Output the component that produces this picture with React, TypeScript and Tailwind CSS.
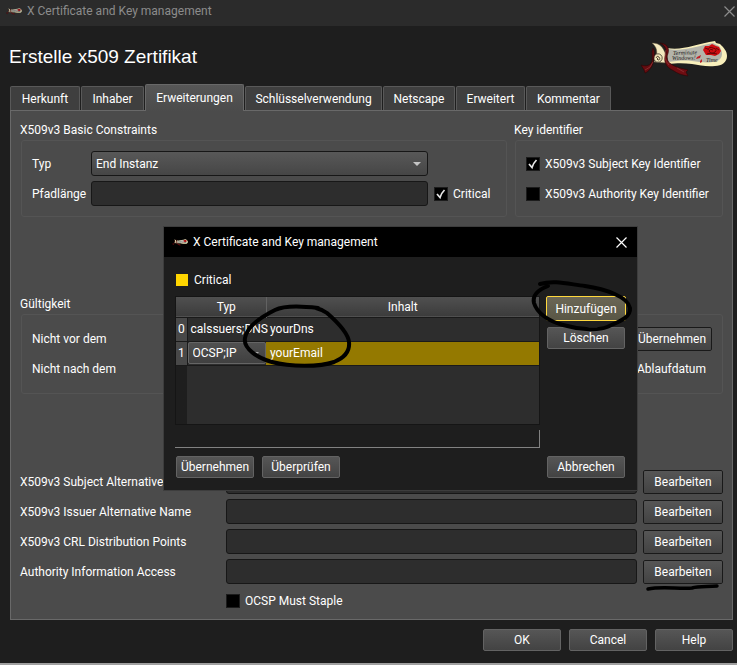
import React from "react";

const buttonBase =
  "rounded-[2px] border bg-linear-to-b from-[#565656] to-[#434343] text-center whitespace-nowrap text-white";
const dialogButton = `${buttonBase} h-[22px] w-[78px] border-[#636363]`;
const panelButton = `${buttonBase} h-6 w-20 shrink-0 border-[#666] outline -outline-offset-1 outline-[#191919]`;
const lineInput =
  "h-[25px] min-w-0 flex-1 rounded-[3px] border border-[#171717] bg-[#2d2d2d] px-1 text-white";

function Scroll({ className }: { className: string }) {
  return (
    <svg className={className} viewBox="0 0 88 38" aria-hidden="true">
      <path
        d="M27 8 C42 11 56 4 75 1 L76 3 L80 4 C84 8 87 11 87 16 C87 22 82 26 75 26 C66 27 60 25 52 24 C44 23 37 23 28 24 Z"
        fill="#f8efbb"
      />
      <path d="M28 9 C42 12 58 6 73 3 L79 6 C82 10 84 16 79 20 C72 24 61 22 52 21 C44 20 36 21 28 22 Z" fill="#b4b4aa" />
      <path d="M12 3 C20 3 23 7 26 15 L27 23 L14 22 C17 15 19 9 12 3Z" fill="#f3e8bd" stroke="#60543c" strokeWidth=".5" />
      <circle cx="18" cy="18" r="4.2" fill="#efe4b8" stroke="#3b342b" strokeWidth=".8" />
      <path d="M16 18 q1 -3 3 -1 q2 3 -1 3 q-2 -1 0 -2" fill="none" stroke="#463929" strokeWidth=".9" />
      <path d="M13 8 C16 13 13 19 13 23 C12 29 6 33 5 33 L4 30 L1 25 C7 27 11 25 12 21 C13 16 11 12 13 8Z" fill="#650c10" stroke="#2c0505" strokeWidth=".6" />
      <path d="M20 3 C29 4 30 10 27 16 C26 26 41 28 48 30 L46 32 L48 36 C41 35 37 33 34 31 C25 27 23 20 26 14 C27 8 24 5 20 3Z" fill="#6e0d12" stroke="#2c0505" strokeWidth=".6" />
      <path d="M26 10 q-3 9 3 15 M5 30 q6 -2 8 -8 M37 28 l7 4" fill="none" stroke="#94383a" strokeWidth=".7" />
      <g className="font-['Liberation_Serif',serif] italic" fill="#202020" fontSize="6">
        <text x="33" y="15" transform="rotate(-2 33 15)">Terminate</text>
        <text x="32" y="20" transform="rotate(-1 32 20)">Windows!</text>
        <text x="66" y="22">Time</text>
      </g>
      <path d="M63 10 L65 6 L69 6 L72 4 L76 6 L79 7 L81 11 L79 14 L75 16 L71 15 L66 15Z" fill="#ce0c10" />
      <path d="M68 10 q1 -4 5 -2 q5 1 2 4 q-4 3 -6 -1 q1 -3 4 -1 M65 8 l3 1 M76 8 l3 2 M67 14 l4 -1 l6 1" fill="none" stroke="#650507" strokeWidth="1" />
      <path d="M57 17 l4 -2 l-1 3 -4 1Z M60 21 l2 -2 0 3 -2 1Z" fill="#bc2028" />
    </svg>
  );
}

function CloseIcon({ className }: { className: string }) {
  return (
    <svg className={className} width="11" height="11" viewBox="0 0 11 11" fill="none" stroke="currentColor" strokeWidth="1.2" aria-hidden="true">
      <path d="M.5 .5 L10.5 10.5 M10.5 .5 L.5 10.5" />
    </svg>
  );
}

function Check({ label, checked = false }: { label: string; checked?: boolean }) {
  return (
    <label className="flex items-center gap-[5px] whitespace-nowrap">
      <span className="grid">
        <input
          type="checkbox"
          defaultChecked={checked}
          className="peer col-start-1 row-start-1 size-[14px] appearance-none border border-[#1c1c1c] bg-black"
        />
        <svg
          className="pointer-events-none invisible col-start-1 row-start-1 size-[14px] peer-checked:visible"
          viewBox="0 0 14 14"
          fill="none"
          stroke="#e6e6e6"
          strokeWidth="1.7"
          aria-hidden="true"
        >
          <path d="M3 7 L6 10.500 C7 7 8.500 5 10.500 3" />
        </svg>
      </span>
      {label}
    </label>
  );
}

function Tab({ label, width, active = false }: { label: string; width: string; active?: boolean }) {
  return (
    <button
      type="button"
      role="tab"
      aria-selected={active}
      className={`${width} rounded-t-[2px] border border-b-0 text-center whitespace-nowrap ${
        active
          ? "relative -mb-px h-[27px] border-[#686868] bg-linear-to-b from-[#565656] to-[#4b4b4b]"
          : "h-6 border-[#595959] bg-[#3f3f3f]"
      }`}
    >
      {label}
    </button>
  );
}

function Group({ title, className, children }: { title: string; className: string; children: React.ReactNode }) {
  return (
    <section className={className} aria-label={title}>
      <h2 className="h-5 leading-5">{title}</h2>
      <div className="ml-px rounded-[3px] border border-[#545454] px-[10px] py-[10px]">{children}</div>
    </section>
  );
}

function ExtensionRow({ label, id, marked = false }: { label: string; id: string; marked?: boolean }) {
  return (
    <div className="flex items-center">
      <label htmlFor={id} className="w-[206px] shrink-0 whitespace-nowrap">
        {label}
      </label>
      <input id={id} type="text" className={lineInput} />
      <div className="relative ml-[6px]">
        <button type="button" className={`${panelButton} block`}>
          Bearbeiten
        </button>
        {marked && (
          <svg className="pointer-events-none absolute top-[24px] left-0" width="80" height="8" viewBox="0 0 80 8" fill="none" aria-hidden="true">
            <path d="M5 5 C18 2 35 5 49 4 C56 2 65 3 74 2" stroke="#000" strokeWidth="3.500" strokeLinecap="round" />
          </svg>
        )}
      </div>
    </div>
  );
}

function NamesDialog() {
  return (
    <div role="dialog" aria-label="X Certificate and Key management" className="absolute top-[227px] left-[164px] w-[473px] bg-[#1e1e1e] outline outline-[#3d3d3d]">
      <header className="flex h-[30px] items-center bg-black pr-[10px] pl-2">
        <Scroll className="h-[7px] w-4" />
        <h2 className="ml-[5px] flex-1">X Certificate and Key management</h2>
        <button type="button" aria-label="Schließen">
          <CloseIcon className="text-white" />
        </button>
      </header>
      <div className="px-[11px] pt-[13px] pb-3">
        <label className="flex h-5 items-center gap-[6px] pl-px">
          <input type="checkbox" className="size-3 appearance-none bg-[#ffd500]" />
          Critical
        </label>
        <div className="mt-[4px] flex items-start">
          <div className="mt-[2px] h-[129px] min-w-0 flex-1 border border-[#151515] bg-linear-to-r from-[#1e1e1e] from-[11px] to-[#2d2d2d] to-[11px]">
            <table className="w-full table-fixed border-collapse">
              <colgroup>
                <col className="w-[11px]" />
                <col className="w-[79px]" />
                <col />
              </colgroup>
              <thead>
                <tr className="h-5 border-b border-[#1a1a1a] bg-linear-to-b from-[#505050] to-[#3c3c3c]">
                  <td className="p-0" />
                  <th className="border-r border-[#626262] p-0 font-normal">Typ</th>
                  <th className="p-0 font-normal">Inhalt</th>
                </tr>
              </thead>
              <tbody>
                <tr className="h-6 border-b border-[#1a1a1a]">
                  <th className="border-r border-[#1a1a1a] bg-[#484848] p-0 font-normal">0</th>
                  <td className="p-0 pl-[3px] whitespace-nowrap">calssuers;DNS</td>
                  <td className="p-0 pl-1">yourDns</td>
                </tr>
                <tr className="h-6 border-b border-[#1a1a1a]">
                  <th className="border-r border-[#1a1a1a] bg-[#484848] p-0 font-normal">1</th>
                  <td className="p-0">
                    <div className="grid items-center">
                      <select aria-label="Typ" className="col-start-1 row-start-1 h-[22px] w-full appearance-none rounded-[2px] border border-[#656565] bg-linear-to-b from-[#505050] to-[#404040] pl-1">
                        <option>OCSP;IP</option>
                      </select>
                      <span className="pointer-events-none col-start-1 row-start-1 mr-[7px] justify-self-end border-x-[3px] border-t-[3px] border-x-transparent border-t-[#aaa]" />
                    </div>
                  </td>
                  <td className="bg-[#947900] p-0 pl-1">yourEmail</td>
                </tr>
              </tbody>
            </table>
          </div>
          <div className="ml-[6px] flex flex-col items-center gap-[6px] pt-[2px]">
            <button type="button" className="h-[25px] w-20 rounded-[2px] border border-[#ffd83c] bg-linear-to-b from-[#6b6756] to-[#595645] text-center">
              Hinzufügen
            </button>
            <button type="button" className={dialogButton}>
              Löschen
            </button>
          </div>
        </div>
        <div className="mt-[5px] mr-[86px] h-[18px] border-r border-b border-[#828282]" />
        <footer className="mt-2 flex gap-2 px-px">
          <button type="button" className={dialogButton}>
            Übernehmen
          </button>
          <button type="button" className={dialogButton}>
            Überprüfen
          </button>
          <button type="button" className={`${dialogButton} ml-auto`}>
            Abbrechen
          </button>
        </footer>
      </div>
      <svg className="pointer-events-none absolute inset-0" width="473" height="263" viewBox="164 227 473 263" fill="none" stroke="#000" strokeWidth="4" strokeLinecap="round" strokeLinejoin="round" aria-hidden="true">
        <path d="M318 308 C302 306 285 305 275 310 C261 317 247 326 245 338 C243 349 258 358 272 362 C290 367 320 367 334 362 C344 358 350 351 349 342 C348 332 335 320 327 313 C323 310 320 309 316 308" />
        <path d="M540 284 C554 280 568 284 585 286 C606 289 628 297 630 308 C631 318 618 322 607 327 C597 331 577 329 563 325 C548 321 537 313 534 303 C532 294 540 289 548 286" />
      </svg>
    </div>
  );
}

export default function App() {
  return (
    <main className="relative min-h-screen border-b-2 border-[#a0a0a0] bg-[#1e1e1e] font-['Roboto','Noto_Sans',sans-serif] text-[12px] leading-4 text-white">
      <header className="flex h-[26px] items-center bg-[#2b2b2b] pr-[2px] pb-1 pl-[6px] text-[#8c8c8c]">
        <Scroll className="h-[7px] w-4 opacity-80" />
        <span className="ml-[5px] flex-1">X Certificate and Key management</span>
        <button type="button" aria-label="Fenster schließen">
          <CloseIcon className="text-[#8c8c8c]" />
        </button>
      </header>
      <div className="flex h-[58px] items-start justify-between pr-[9px] pl-[9px]">
        <h1 className="pt-[19px] font-['Liberation_Sans',Arial,sans-serif] text-[19px] leading-6">Erstelle x509 Zertifikat</h1>
        <Scroll className="mt-[14px] h-[38px] w-[88px]" />
      </div>

      <div role="tablist" className="flex items-end gap-px pl-[10px]">
        <Tab label="Herkunft" width="w-[70px]" />
        <Tab label="Inhaber" width="w-[63px]" />
        <Tab label="Erweiterungen" width="w-[99px]" active />
        <Tab label="Schlüsselverwendung" width="w-[137px]" />
        <Tab label="Netscape" width="w-[72px]" />
        <Tab label="Erweitert" width="w-[69px]" />
        <Tab label="Kommentar" width="w-[85px]" />
      </div>

      <div role="tabpanel" className="mr-1 ml-[10px] h-[510px] border border-[#696969] bg-[#4b4b4b] pt-[9px] pr-[9px] pl-[9px]">
        <div className="flex gap-[7px]">
          <Group title="X509v3 Basic Constraints" className="min-w-0 flex-1">
            <div className="flex items-center">
              <label htmlFor="typ" className="w-[59px] shrink-0">Typ</label>
              <div className="mr-[68px] grid min-w-0 flex-1 items-center">
                <select id="typ" className="col-start-1 row-start-1 h-[25px] w-full appearance-none rounded-[3px] border border-[#171717] bg-linear-to-b from-[#585858] to-[#464646] pl-1">
                  <option>End Instanz</option>
                </select>
                <span className="pointer-events-none col-start-1 row-start-1 mr-[7px] justify-self-end border-x-4 border-t-4 border-x-transparent border-t-[#c5c5c5]" />
              </div>
            </div>
            <div className="mt-[5px] flex items-center">
              <label htmlFor="pfad" className="w-[59px] shrink-0">Pfadlänge</label>
              <input id="pfad" type="text" className={lineInput} />
              <div className="ml-[6px] w-[62px]">
                <Check label="Critical" checked />
              </div>
            </div>
          </Group>
          <Group title="Key identifier" className="w-[209px] shrink-0">
            <div className="flex h-[25px] items-center">
              <Check label="X509v3 Subject Key Identifier" checked />
            </div>
            <div className="mt-[5px] flex h-[25px] items-center">
              <Check label="X509v3 Authority Key Identifier" />
            </div>
          </Group>
        </div>

        <Group title="Gültigkeit" className="mt-[77px]">
          <div className="flex h-7 items-center justify-between">
            <span>Nicht vor dem</span>
            <button type="button" className={panelButton}>Übernehmen</button>
          </div>
          <div className="mt-[2px] flex h-7 items-center justify-between pr-[6px]">
            <span>Nicht nach dem</span>
            <Check label="Ablaufdatum" />
          </div>
        </Group>

        <div className="mt-[75px] flex flex-col gap-[5px]">
          <ExtensionRow id="san" label="X509v3 Subject Alternative Name" />
          <ExtensionRow id="ian" label="X509v3 Issuer Alternative Name" />
          <ExtensionRow id="crl" label="X509v3 CRL Distribution Points" />
          <ExtensionRow id="aia" label="Authority Information Access" marked />
        </div>
        <div className="mt-[9px] ml-[206px]">
          <Check label="OCSP Must Staple" />
        </div>
      </div>

      <footer className="flex justify-end gap-2 pt-[9px] pr-1">
        <button type="button" className={dialogButton}>OK</button>
        <button type="button" className={dialogButton}>Cancel</button>
        <button type="button" className={dialogButton}>Help</button>
      </footer>

      <NamesDialog />
    </main>
  );
}
